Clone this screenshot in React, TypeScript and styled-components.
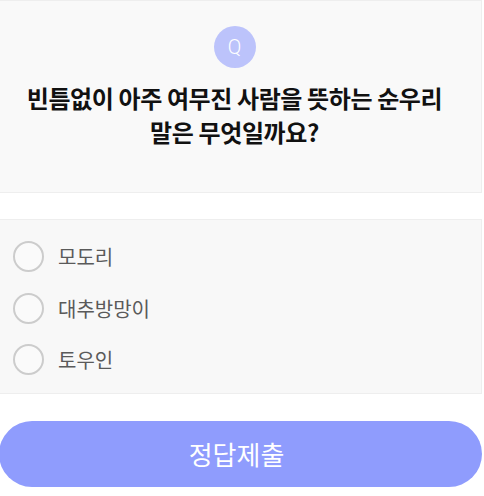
import React from "react";
import styled, { createGlobalStyle } from "styled-components";

const Global = createGlobalStyle`
  html, body { margin: 0; padding: 0; background: #fff; }
  body { font-family: "Noto Sans CJK KR", "Noto Sans", sans-serif; }
`;

const Page = styled.div`
  width: 482px;
  display: flex;
  flex-direction: column;
  gap: 26px;
`;

const QuestionCard = styled.section`
  background: #f9f9f9;
  border: 1px solid #eeeeee;
  border-left: none;
  padding: 25px 26px 43px 14px;
  display: flex;
  flex-direction: column;
  align-items: center;
  gap: 13px;
`;

const QBadge = styled.div`
  width: 42px;
  height: 42px;
  border-radius: 50%;
  background: #bcc3fb;
  color: #fff;
  font-family: "Roboto", sans-serif;
  font-weight: 300;
  font-size: 20px;
  display: flex;
  align-items: center;
  justify-content: center;
`;

const QuestionText = styled.h2`
  margin: 0;
  font-size: 24px;
  font-weight: 700;
  line-height: 34px;
  color: #111;
  text-align: center;
  letter-spacing: -0.4px;
  white-space: nowrap;
`;

const OptionCard = styled.section`
  background: #f8f8f8;
  border: 1px solid #eeeeee;
  border-left: none;
  padding: 11px 0 7px 13px;
  display: flex;
  flex-direction: column;
`;

const OptionRow = styled.label`
  height: 51.5px;
  display: flex;
  align-items: center;
  gap: 14px;
  cursor: pointer;
`;

const Radio = styled.span`
  width: 27px;
  height: 27px;
  border-radius: 50%;
  border: 2px solid #cccccc;
  box-sizing: content-box;
  background: #fafafa;
`;

const OptionText = styled.span`
  font-size: 20px;
  font-weight: 400;
  color: #5a5a5a;
`;

const SubmitButton = styled.button`
  width: 483px;
  margin: 1px 0 0 -1px;
  height: 66px;
  border: none;
  border-radius: 33px;
  background: #8f9cfd;
  color: #fff;
  font-family: "Noto Sans CJK KR", sans-serif;
  font-size: 26px;
  padding: 0 8px 0 0;
  cursor: pointer;
`;

const options = ["모도리", "대추방망이", "토우인"];

export default function App() {
  return (
    <>
      <Global />
      <Page>
        <QuestionCard>
          <QBadge>Q</QBadge>
          <QuestionText>
            빈틈없이 아주 여무진 사람을 뜻하는 순우리
            <br />
            말은 무엇일까요?
          </QuestionText>
        </QuestionCard>
        <OptionCard>
          {options.map((o) => (
            <OptionRow key={o}>
              <Radio />
              <OptionText>{o}</OptionText>
            </OptionRow>
          ))}
        </OptionCard>
        <SubmitButton>정답제출</SubmitButton>
      </Page>
    </>
  );
}
